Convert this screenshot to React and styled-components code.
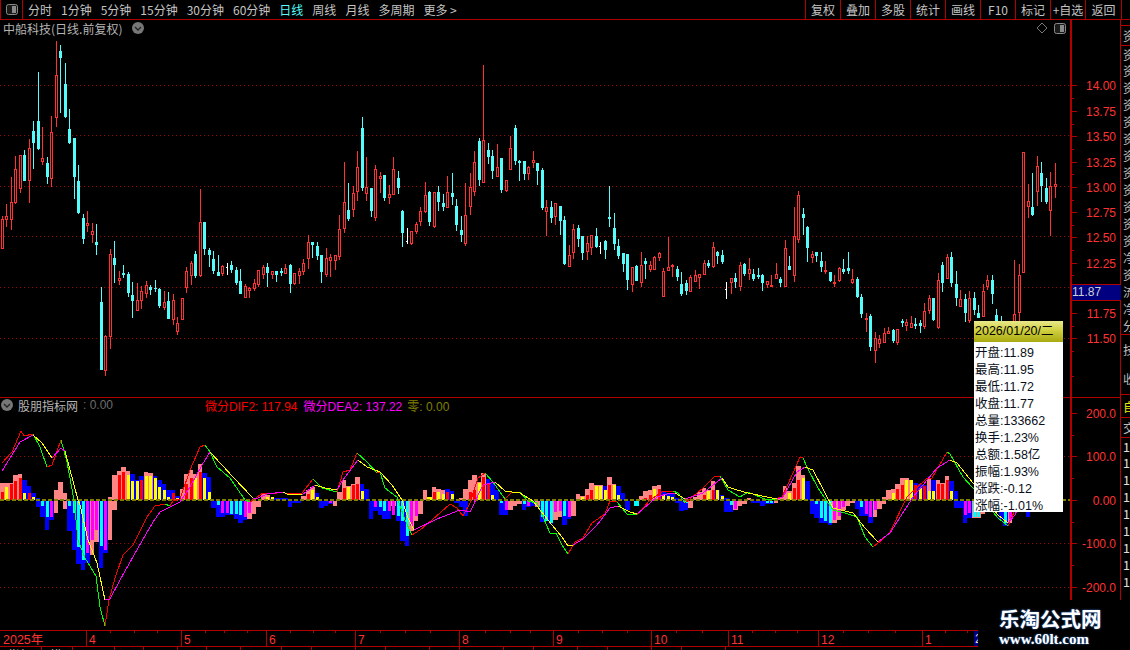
import React from 'react';
import styled, { createGlobalStyle } from 'styled-components';

const RED = '#ff3232';
const CYAN = '#54fcfc';
const LINE = '#b00000';
const DOT = '#a00000';
const UI_FONT = '"Liberation Sans", "Noto Sans CJK SC", sans-serif';

// kind, high, body top, body bottom, low (page pixels), one row per day
const CANDLES = [
  ['r',216,219,249,249],['r',204,216,220,227],['r',177,202,220,230],['r',156,169,203,204],['r',155,155,189,193],
  ['c',150,155,181,181],['r',139,148,181,203],['c',121,131,143,169],['c',72,121,149,150],['r',127,158,162,165],
  ['c',157,163,177,184],['r',116,132,179,187],['r',41,75,118,127],['c',45,51,58,113],['c',63,84,117,118],
  ['c',109,129,143,144],['c',138,138,177,199],['c',165,181,213,214],['c',214,218,239,244],['r',211,223,226,232],
  ['r',223,231,235,243],['c',224,242,245,255],['c',287,302,370,370],['r',335,336,371,376],['r',249,254,337,349],
  ['c',241,258,265,283],['r',271,278,281,285],['c',265,273,275,278],['c',272,274,293,297],['c',282,295,301,318],
  ['r',283,300,311,311],['r',286,291,301,309],['r',281,285,294,298],['c',285,287,290,295],['c',280,288,289,292],
  ['c',288,289,306,308],['r',291,302,308,310],['c',292,301,319,319],['r',294,300,320,325],['r',317,323,332,335],
  ['r',298,298,320,320],['r',267,271,288,293],['r',261,263,276,285],['c',251,254,276,278],['r',189,222,276,277],
  ['c',222,222,249,255],['c',248,250,255,267],['c',251,259,271,274],['c',255,272,276,276],['r',265,266,274,276],
  ['w',263,267,267,275],['c',261,265,270,273],['c',267,270,283,285],['c',269,281,294,294],['r',284,286,298,298],
  ['r',287,288,291,298],['r',279,283,289,291],['r',270,270,285,287],['r',265,267,275,279],['c',263,267,273,287],
  ['r',271,271,275,279],['c',271,271,275,282],['c',268,271,273,276],['r',264,268,274,274],['c',264,265,284,293],
  ['r',273,273,284,285],['r',268,271,276,284],
  ['r',259,263,272,275],['r',235,242,259,269],['c',242,242,245,258],['c',242,246,256,260],['c',255,255,272,283],
  ['r',248,258,275,277],['r',254,257,261,277],['r',255,255,261,270],['r',215,229,257,260],['r',162,202,229,233],
  ['c',183,210,219,221],['r',186,193,210,217],['r',151,167,192,201],['c',117,128,188,191],['r',157,187,194,201],
  ['c',188,188,211,217],['r',165,169,218,221],['r',172,176,179,193],['c',175,175,198,201],['r',185,194,198,204],
  ['r',157,169,195,195],['c',171,178,188,194],['c',210,211,233,247],['w',228,241,241,244],['r',231,231,244,245],
  ['r',222,224,232,234],['r',207,211,222,226],['r',182,195,212,213],['c',191,192,222,226],['r',192,192,227,228],
  ['c',186,192,202,211],['c',194,203,207,211],['r',176,192,208,208],['c',173,193,197,205],['c',199,206,225,231],
  ['c',216,230,235,242],['r',183,215,244,246],['r',173,187,207,215],['r',151,162,192,196],['c',138,141,180,186],
  ['r',65,140,183,183],['c',143,150,157,164],['c',150,156,171,179],['r',144,167,177,177],['c',158,158,190,193],
  ['r',180,180,191,192],['r',136,148,170,170],['c',125,128,161,165],['c',160,161,163,181],['c',161,161,174,180],
  ['r',166,167,174,180],['r',151,160,163,168],['c',163,163,171,185],['c',168,170,208,210],['r',200,207,212,236],
  ['c',201,207,218,223],['r',203,203,217,225],['c',206,206,221,235],['c',216,220,264,265],['r',245,255,267,267],
  ['r',224,229,253,259],['c',225,228,239,247],['c',236,236,253,260],['r',236,243,252,260],['r',235,235,248,255],
  ['c',228,236,247,248],['w',242,246,246,254],['c',240,241,250,259],['c',186,217,219,227],['c',213,228,244,250],
  ['c',239,246,256,259],['c',253,253,264,272],['c',254,254,280,290],['r',267,267,285,292],['c',265,266,281,281],
  ['r',252,265,283,287],['c',258,261,264,279],['r',261,265,270,272],
  ['r',256,257,270,270],['r',252,253,258,261],['r',268,271,297,297],['r',237,267,271,271],['r',264,265,266,277],
  ['c',266,269,277,281],['c',272,284,294,296],['c',280,283,291,295],['r',275,277,292,292],['r',270,275,282,282],
  ['r',274,274,278,289],['r',260,263,275,275],['c',260,263,266,268],['r',242,247,267,268],['c',251,252,256,264],
  ['c',250,255,262,264],['w',282,289,289,299],['r',278,278,283,294],['c',273,278,282,288],['r',262,265,287,291],
  ['c',263,264,274,276],['r',258,269,274,280],['c',269,274,279,281],['c',268,275,277,279],['c',274,275,283,291],
  ['r',281,281,285,288],['r',275,285,287,287],['r',263,274,279,279],['c',277,279,283,287],['r',240,248,287,287],
  ['c',256,266,270,270],['r',207,236,276,282],['r',191,195,240,243],['c',208,214,218,235],['c',226,227,248,262],
  ['r',251,254,258,263],['c',252,252,256,262],['c',252,261,267,272],['r',261,270,272,274],['c',272,272,281,282],
  ['r',275,282,284,287],['r',267,268,281,282],['c',259,269,272,274],['c',252,268,271,274],['r',269,279,283,284],
  ['c',277,279,297,298],['c',294,297,314,318],['r',313,318,320,332],['c',314,316,347,351],['r',332,338,351,363],
  ['r',335,339,344,348],['r',328,333,343,343],['r',327,331,334,334],['c',329,330,341,343],['r',329,329,343,345],
  ['c',319,321,323,327],['r',319,322,326,331],['r',316,323,328,328],['c',318,324,326,329],['c',320,323,326,333],
  ['r',303,311,327,329],['r',295,298,311,314],['c',298,298,320,321],['r',273,280,328,329],['c',262,265,283,292],
  ['r',254,257,279,279],['c',252,257,283,287],['c',271,284,298,306],['r',290,299,307,307],['c',294,299,313,322],
  ['r',291,298,321,323],['c',292,298,310,315],['c',305,313,318,318],['r',284,291,317,317],['r',275,280,287,290],
  ['c',275,280,294,304],['c',309,315,330,335],['c',316,325,335,340],['c',330,335,342,348],['c',332,336,344,350],
  ['r',260,314,330,335],['r',264,275,313,321],['r',152,152,273,273],['r',184,201,207,218],['c',173,207,215,216],
  ['r',156,166,192,206],['c',162,173,186,202],['c',178,188,202,204],['r',172,186,211,236],['r',163,184,187,198],
];

// day, back colour, back height, front colour, front height; below the zero line is negative
const BARS = [
  [0,'s',17,'r',8],[1,'s',17,'y',13],[2,'s',17,'r',16],[3,'s',25,'r',19],[4,'s',26,'r',22],[5,'b',20,'y',7],[6,'b',14,'r',7],[7,'b',7,'y',3],[8,'b',2],
  [8,'b',-6],[9,'b',-16,'c',-5],[10,'b',-29,'c',-16],[11,'b',-19,'m',-16],[12,'s',-12],[12,'s',10],[13,'s',18],[14,'s',7],[14,'s',-8],
  [15,'b',-30,'c',-5],[16,'b',-49,'c',-12],[17,'b',-63,'c',-46],[18,'b',-69,'c',-59],[19,'b',-62,'m',-52],[20,'s',-54,'m',-39],[21,'s',-41,'m',-29],
  [22,'b',-67,'c',-45],[23,'b',-52,'m',-49],[24,'s',-39],[24,'s',3],[25,'s',-9],[25,'s',25],
  [26,'s',29,'r',25],[27,'s',33,'r',28],[28,'s',29,'y',25],[29,'b',26,'y',19],[30,'b',20,'y',19],[31,'b',24,'r',20],[32,'s',28,'y',24],[33,'s',27,'y',24],
  [34,'b',24,'y',22],[35,'b',20,'y',13],[36,'b',16,'y',10],[37,'b',10,'y',3],[38,'b',10,'r',7],[39,'b',4,'y',2],[40,'s',11],[41,'s',26,'r',16],[42,'s',30,'r',22],
  [43,'s',26,'y',22],[44,'s',36,'r',28],[45,'b',27,'y',22],[46,'b',23,'y',8],
  [47,'b',-7],[48,'b',-16,'c',-4],[49,'b',-16,'m',-12],[50,'b',-14,'m',-12],[51,'b',-14,'c',-13],[52,'b',-18,'c',-13],[53,'b',-22,'c',-14],[54,'b',-19,'m',-16],
  [55,'s',-18,'m',-12],[56,'s',-13],[57,'s',-6],[58,'s',7],[59,'s',5,'y',3],[60,'b',2,'y',3],[61,'b',2],[62,'b',2],[63,'b',2],[64,'b',-6],[65,'b',-2],[66,'b',-2],
  [67,'s',4],[68,'s',10,'r',6],[69,'s',13,'y',10],[70,'b',7,'y',3],[71,'b',-7],[72,'b',-5],[73,'b',-3,'m',-2],[74,'s',-5],
  [75,'s',8],[76,'s',20,'r',12],[77,'s',14,'y',13],[78,'s',16,'r',15],[79,'s',23,'r',16],[80,'b',16,'y',9],[81,'b',11],
  [82,'b',-18],[83,'b',-10,'m',-6],[84,'b',-14,'c',-6],[85,'b',-18,'c',-10],[86,'b',-18,'m',-10],[87,'s',-5,'m',-14],[88,'b',-20,'c',-15],[89,'b',-40,'c',-20],[90,'b',-45,'c',-35],
  [91,'s',-30,'m',-25],[92,'s',-20,'m',-15],[93,'s',-13],[94,'s',10],[95,'y',3],[96,'s',13,'r',8],[97,'s',11,'y',8],[98,'s',10,'y',6],[99,'b',11,'r',8],[100,'b',9,'y',6],
  [101,'b',-2],[102,'b',-6],[102,'s',2],[103,'s',11],[103,'b',-15],
  [104,'s',20,'r',8],[105,'s',25,'r',10],[106,'s',18,'y',17],[107,'s',27,'r',23],[108,'b',21,'r',17],[109,'b',17,'y',5],[110,'b',10],
  [111,'b',-14,'c',-2],[112,'b',-14,'m',-9],[113,'s',-9],[114,'s',-5],[115,'s',-3],[116,'b',-9,'c',-3],[117,'b',-6,'m',-5],[118,'b',-5],[119,'s',-6],
  [120,'b',-21,'c',-16],[121,'b',-20,'c',-20],[122,'b',-23,'c',-22],[123,'s',-19,'m',-11],[124,'s',-16,'m',-10],[125,'b',-24,'c',-15],[126,'b',-18,'m',-16],[127,'s',-15],
  [128,'s',6],[129,'s',4,'y',3],[130,'s',11,'r',5],[131,'s',17,'r',10],[132,'s',15,'y',14],[133,'s',15,'y',14],[134,'b',14,'y',10],[135,'s',23,'r',15],[136,'s',16,'y',15],[137,'b',14,'y',5],[138,'b',7],
  [139,'b',-9],[141,'c',-5],[142,'s',4],[143,'s',9,'r',2],[144,'s',10,'r',5],[145,'s',14,'y',11],[146,'s',15,'r',11],[147,'b',9,'y',5],[148,'b',7,'y',4],[149,'b',7,'y',3],[150,'b',2],
  [150,'b',-2],[151,'b',-10],[152,'b',-9,'c',-2],[153,'s',-7],[154,'s',3],[155,'s',8],[156,'s',12,'r',5],[157,'s',10,'y',9],[158,'s',19,'r',10],[159,'b',10,'y',10],[160,'b',5,'y',4],[161,'b',-11],[161,'b',2],
  [162,'b',-11,'c',-4],[163,'s',-9,'m',-8],[164,'s',-5],[165,'s',-3],[166,'s',2],
  [167,'b',-2],[168,'b',-2],[169,'b',-5],[170,'b',-3,'c',-2],[171,'b',-3,'c',-2],[172,'s',-2],[173,'s',2],[174,'s',14],[175,'s',9,'y',7],[176,'s',17,'r',12],[177,'s',34,'r',20],[178,'s',25,'y',22],[179,'b',19],
  [180,'b',-13],[181,'b',-17,'c',-3],[182,'b',-22,'c',-17],[183,'b',-22,'c',-20],[184,'b',-24,'c',-22],[185,'s',-22,'m',-19],[186,'s',-19,'m',-15],[187,'s',-9,'m',-6],[188,'s',-5],[189,'s',-2],
  [190,'b',-8],[191,'b',-15,'c',-6],[192,'b',-15,'m',-13],[193,'b',-22,'m',-16],[194,'s',-16,'m',-9],[195,'s',-8],[196,'s',-3],[196,'s',3],
  [197,'s',10],[198,'s',11,'y',7],[199,'s',16,'r',11],[200,'s',22,'r',15],[201,'s',22,'y',20],[202,'s',20,'y',20],[203,'b',17,'r',15],[204,'b',16,'y',12],[205,'b',15,'r',14],[206,'s',21,'y',9],[207,'b',20,'y',9],
  [208,'s',20,'r',16],[209,'s',17,'r',16],[210,'s',24,'r',20],[211,'b',19,'y',9],[212,'b',9],
  [212,'b',-7],[213,'b',-7],[214,'b',-22,'m',-14],[215,'b',-17,'m',-12],[216,'s',-17,'c',-16],[217,'s',-17,'c',-16],[218,'s',-13],[222,'b',-18],[223,'b',-25,'c',-22],[224,'s',-22,'m',-18],[228,'b',-16],
];

const BAR_COLORS = { s: '#ff8585', b: '#0000ff', r: '#ff0000', y: '#ffff00', c: '#00ffff', m: '#ff00ff' };

// runs of [x, y]; each run carries on from where the last one ended
const FAST_LINE = [
  ['#ff0000',[2,463],[12,452],[21,431],[24,436],[33,434]],
  ['#00ff00',[40,447],[47,467]],
  ['#ff0000',[52,465],[61,440]],
  ['#00ff00',[67,462],[74,500],[78,540],[85,558],[96,576],[100,607],[105,626]],
  ['#ff0000',[109,600],[115,578],[123,555],[133,545],[147,517],[155,506],[165,504]],
  ['#00ff00',[170,506]],
  ['#ff0000',[173,501],[180,499],[190,470],[200,447],[205,445]],
  ['#00ff00',[210,452],[217,467],[230,478],[245,500],[250,502]],
  ['#ff0000',[263,493],[277,493]],
  ['#00ff00',[283,492],[287,494]],
  ['#ff0000',[302,493],[313,479]],
  ['#00ff00',[322,488],[337,492]],
  ['#ff0000',[343,472],[350,470],[357,453]],
  ['#00ff00',[367,462],[377,473]],
  ['#ff0000',[380,472]],
  ['#00ff00',[385,488],[397,497],[405,520],[412,535]],
  ['#ff0000',[420,530],[432,520],[450,504],[457,508],[463,516],[470,503],[478,478],[485,473]],
  ['#00ff00',[493,482],[505,499]],
  ['#ff0000',[512,492],[520,492]],
  ['#00ff00',[528,501],[537,503],[550,533],[556,533],[562,545],[568,554]],
  ['#ff0000',[575,542],[583,538],[592,523],[605,514],[610,501],[617,502]],
  ['#00ff00',[627,514],[637,515]],
  ['#ff0000',[650,500],[662,492],[673,491]],
  ['#00ff00',[678,493],[685,503]],
  ['#ff0000',[703,488],[715,476],[720,476]],
  ['#00ff00',[728,490],[740,497],[748,492],[767,500],[775,499]],
  ['#ff0000',[782,497],[793,473],[800,457],[803,458]],
  ['#00ff00',[807,467],[818,488],[833,510],[845,513],[857,517],[865,537],[873,547]],
  ['#ff0000',[882,540],[890,532],[907,497],[927,478],[932,478],[947,452]],
  ['#00ff00',[950,454],[963,477],[973,488],[998,518],[1008,526]],
  ['#ff0000',[1015,510],[1025,480]],
];

const SLOW_LINE = [
  ['#ff00ff',[2,471],[20,442],[33,435]],
  ['#ffff00',[42,443],[52,458]],
  ['#ff00ff',[61,448],[65,451]],
  ['#ffff00',[78,500],[80,505],[88,540],[97,563],[105,600]],
  ['#ff00ff',[110,599],[120,580],[138,548],[153,522],[160,512],[170,507],[180,502],[190,487],[202,465],[210,452]],
  ['#ffff00',[233,477],[253,498]],
  ['#ff00ff',[258,498],[267,494],[283,492]],
  ['#ffff00',[287,494],[302,495]],
  ['#ff00ff',[315,485]],
  ['#ffff00',[325,488],[337,490]],
  ['#ff00ff',[343,480],[358,460]],
  ['#ffff00',[367,467],[380,472],[392,485],[402,500],[408,518],[414,530]],
  ['#ff00ff',[437,519],[460,510],[470,512],[483,485],[495,482]],
  ['#ffff00',[505,491],[512,492],[520,493],[533,501],[552,525],[562,537],[568,546],[573,545]],
  ['#ff00ff',[583,539],[597,525],[610,508],[618,506]],
  ['#ffff00',[630,512],[637,514]],
  ['#ff00ff',[657,497],[670,493],[675,493]],
  ['#ffff00',[685,499]],
  ['#ff00ff',[703,493],[722,478]],
  ['#ffff00',[728,487],[737,490],[748,493],[767,497],[777,499]],
  ['#ff00ff',[783,497],[797,472],[805,467]],
  ['#ffff00',[813,470],[825,493],[833,508],[853,513],[865,528],[878,542]],
  ['#ff00ff',[890,533],[913,497],[937,468],[950,460]],
  ['#ffff00',[957,463],[973,483],[998,515],[1008,523]],
  ['#ff00ff',[1015,515],[1025,490]],
];

const PERIODS = ['分时', '1分钟', '5分钟', '15分钟', '30分钟', '60分钟', '日线', '周线', '月线', '多周期', '更多 >'];
const ACTIONS = ['复权', '叠加', '多股', '统计', '画线', 'F10', '标记', '+自选', '返回'];
const PRICE_TICKS = [[85,'14.00'],[111,'13.75'],[136,'13.50'],[162,'13.25'],[187,'13.00'],[212,'12.75'],[237,'12.50'],[263,'12.25'],[313,'11.75'],[338,'11.50']];
const PRICE_GRID = [85, 135, 186, 236, 287, 338];
const MACD_TICKS = [[413,'200.0'],[456,'100.0'],[500,'0.00'],[543,'-100.0'],[587,'-200.0']];
const MONTHS = [[86,'4'],[181,'5'],[266,'6'],[355,'7'],[459,'8'],[553,'9'],[651,'10'],[728,'11'],[818,'12'],[922,'1']];
const MONTH_TICKS = [110,134,157,205,224,247,290,313,335,380,405,430,485,510,530,578,602,627,676,702,752,775,797,843,868,895,945,967];
const QUOTE = [['开盘','11.89'],['最高','11.95'],['最低','11.72'],['收盘','11.77'],['总量','133662'],['换手','1.23%'],['总额','1.58亿'],['振幅','1.93%'],['涨跌','-0.12'],['涨幅','-1.01%']];
const SIDE_ROWS = ['资','资','资','资','资','资','资','资','资','资','资','资','净','资','流','净','分'];
const BOTTOM_TABS = [[42,'指标'],[31,'模板'],[42,''],[29,''],[34,''],[29,''],[34,''],[41,''],[30,''],[44,''],[30,''],[44,''],[30,''],[44,''],[30,''],[44,''],[30,''],[44,''],[30,''],[44,'']];

const GlobalStyle = createGlobalStyle`
  html, body { margin: 0; padding: 0; background: #000; }
  body { font-family: ${UI_FONT}; }
`;

const Page = styled.div`
  position: relative;
  width: 1130px;
  height: 650px;
  background: #000;
  overflow: hidden;
  display: flex;
  flex-direction: column;
`;

const Toolbar = styled.div`
  height: 19px;
  flex: none;
  display: flex;
  align-items: stretch;
  border-bottom: 1px solid ${LINE};
`;

const ToggleCell = styled.div`
  width: 23px;
  flex: none;
  box-sizing: border-box;
  border-left: 1px solid ${LINE};
  border-right: 1px solid ${LINE};
  display: flex;
  align-items: center;
  justify-content: center;
`;

const Periods = styled.div`
  display: flex;
  align-items: center;
  gap: 9px;
  padding-left: 5px;
  flex: 1;
`;

const Period = styled.span`
  font: 12px "Noto Sans CJK SC", sans-serif;
  white-space: nowrap;
  color: ${(p) => (p.$active ? CYAN : '#c4c4c4')};
`;

const Actions = styled.div`
  display: flex;
  margin-right: 8px;
`;

const Action = styled.div`
  width: ${(p) => (p.$wide ? 37 : 35)}px;
  box-sizing: border-box;
  border-left: 1px solid ${LINE};
  border-right: ${(p) => (p.$wide ? `1px solid ${LINE}` : 'none')};
  display: flex;
  align-items: center;
  justify-content: center;
  font: 12px "Noto Sans CJK SC", sans-serif;
  white-space: nowrap;
  color: #c4c4c4;
`;

const Body = styled.div`
  flex: 1;
  display: flex;
  min-height: 0;
`;

const Charts = styled.div`
  width: 1070px;
  flex: none;
  display: flex;
  flex-direction: column;
`;

const Pane = styled.div`
  position: relative;
  flex: none;
  height: ${(p) => p.$height}px;
  border-bottom: ${(p) => (p.$divided ? `1px solid ${LINE}` : 'none')};
`;

const Drawing = styled.svg`
  display: block;
  shape-rendering: crispEdges;
`;

const PaneHead = styled.div`
  position: absolute;
  left: 0;
  right: 0;
  top: ${(p) => p.$top}px;
  height: 16px;
  display: flex;
  align-items: center;
  gap: 4px;
  padding-left: ${(p) => p.$inset}px;
  font: 12px "Noto Sans CJK SC", sans-serif;
  white-space: nowrap;
  color: #b4b4b4;
`;

const HeadIcons = styled.div`
  margin-left: auto;
  display: flex;
  align-items: center;
  gap: 6px;
  padding-right: 4px;
`;

const Reading = styled.span`
  color: ${(p) => p.$color};
  margin-left: ${(p) => p.$gap || 0}px;
  font: 12px ${UI_FONT};
`;

const TimeAxis = styled.div`
  width: 978px;
  height: 15px;
  flex: none;
  border-top: 1px solid ${LINE};
  border-bottom: 1px solid ${LINE};
`;

const BottomTabs = styled.div`
  height: 3px;
  flex: none;
  display: flex;
  overflow: hidden;
`;

const BottomTab = styled.div`
  flex: none;
  box-sizing: border-box;
  width: ${(p) => p.$width}px;
  padding-left: 8px;
  border-right: 1px solid ${LINE};
  font: 12px/16px "Noto Sans CJK SC", sans-serif;
  color: #c4c4c4;
`;

const Axis = styled.div`
  width: 51px;
  flex: none;
  border-left: 2px solid ${LINE};
  border-right: 1px solid ${LINE};
  box-sizing: border-box;
  height: 581px;
`;

const SideStrip = styled.div`
  flex: 1;
  min-width: 0;
  overflow: hidden;
  padding-top: 5px;
  height: 576px;
`;

const SideCell = styled.div`
  height: ${(p) => p.$height || 17}px;
  border-top: ${(p) => (p.$ruled ? `1px solid ${LINE}` : 'none')};
  padding-left: 2px;
  box-sizing: border-box;
  font: 12.5px "Noto Sans CJK SC", sans-serif;
  line-height: ${(p) => p.$height || 17}px;
  white-space: nowrap;
  color: ${(p) => p.$color || '#bcbcbc'};
`;

const PriceTag = styled.div`
  position: absolute;
  left: 1072px;
  top: 284px;
  width: 49px;
  height: 17px;
  box-sizing: border-box;
  border-top: 1px solid ${LINE};
  border-bottom: 1px solid ${LINE};
  background: #000080;
  color: #d0d0d0;
  font: 12px/15px ${UI_FONT};
`;

const QuoteCard = styled.div`
  position: absolute;
  left: 974px;
  top: 321px;
  width: 89px;
  height: 191px;
  background: #fff;
  display: flex;
  flex-direction: column;
`;

const QuoteDate = styled.div`
  height: 21px;
  flex: none;
  margin-bottom: 3px;
  padding-left: 1px;
  background: linear-gradient(#e8e88c, #d0d040 45%, #a8a810);
  color: #000;
  font: 12.5px/21px ${UI_FONT};
  white-space: nowrap;
`;

const QuoteRow = styled.div`
  height: 17px;
  flex: none;
  padding-left: 1px;
  color: #0a1020;
  font: 12.5px/17px ${UI_FONT};
  white-space: nowrap;
`;

const Watermark = styled.div`
  position: absolute;
  left: 978px;
  top: 600px;
  right: 0;
  bottom: 0;
  background: #000;
  display: flex;
  flex-direction: column;
  align-items: flex-start;
  padding-left: 21px;
  box-sizing: border-box;
`;

const MarkName = styled.div`
  margin-top: 6px;
  font: bold 20.5px/24px "Noto Sans CJK SC", sans-serif;
  color: #fff;
  text-shadow: 0 0 2px #3a80e0;
`;

const MarkSite = styled.div`
  margin-top: 1px;
  font: bold 15px/16px "Liberation Serif", serif;
  color: #fff;
  text-shadow: 0 0 2px #3a80e0;
`;

function DotPattern() {
  return (
    <defs>
      <pattern id="dots" x="0" y="0" width="4" height="1" patternUnits="userSpaceOnUse">
        <rect width="1" height="1" fill={DOT} />
      </pattern>
    </defs>
  );
}

function Dotted({ y, width }) {
  return <rect x="0" y={y} width={width} height="1" fill="url(#dots)" />;
}

function Candle({ row, index }) {
  const [kind, high, top, bottom, low] = row;
  const x = Math.floor(2 + 4.5 * index);
  if (kind === 'w') {
    return (
      <g fill="#fff">
        <rect x={x} y={high} width="1" height={low - high} />
        <rect x={x - 1} y={top} width="1" height="1" />
      </g>
    );
  }
  if (kind === 'c') {
    return (
      <g fill={CYAN}>
        <rect x={x} y={high} width="1" height={low - high} />
        <rect x={x - 1} y={top} width="3" height={Math.max(bottom - top, 1)} />
      </g>
    );
  }
  return (
    <g fill={RED}>
      <rect x={x} y={high} width="1" height={Math.max(top - high, 0)} />
      <rect x={x} y={bottom} width="1" height={Math.max(low - bottom, 0)} />
      <rect x={x - 0.5} y={top + 0.5} width="2" height={Math.max(bottom - top - 1, 1)} fill="#000" stroke={RED} />
    </g>
  );
}

function Bar({ bar }) {
  const [index, back, backHeight, front, frontHeight] = bar;
  const left = Math.floor(4.5 * index);
  const right = Math.floor(4.5 * (index + 1));
  const center = Math.floor(2 + 4.5 * index);
  const place = (h) => (h > 0 ? 500 - h : 501);
  return (
    <g>
      <rect x={left} y={place(backHeight)} width={right - left} height={Math.abs(backHeight)} fill={BAR_COLORS[back]} />
      {front && <rect x={center - 1} y={place(frontHeight)} width="3" height={Math.abs(frontHeight)} fill={BAR_COLORS[front]} />}
    </g>
  );
}

// each coloured run starts at the last point of the run before it
function TrendLine({ runs }) {
  let last = null;
  return runs.map(([color, ...points], i) => {
    const all = last ? [last, ...points] : points;
    last = points[points.length - 1];
    return <polyline key={i} points={all.map((p) => p.join(',')).join(' ')} fill="none" stroke={color} strokeWidth="1" />;
  });
}

function PaneToggle() {
  return (
    <svg width="12" height="11" viewBox="0 0 12 11" style={{ display: 'block' }}>
      <rect x="0.5" y="0.5" width="11" height="10" rx="2" fill="#1a1a1a" stroke="#8a8a8a" />
      <rect x="6" y="2" width="4" height="7" fill="#8a8a8a" />
    </svg>
  );
}

function Chevron() {
  return (
    <svg width="12" height="12" viewBox="0 0 12 12" style={{ display: 'block', flex: 'none' }}>
      <circle cx="6" cy="6" r="6" fill="#777" />
      <path d="M3 5 L6 8 L9 5" fill="none" stroke="#222" strokeWidth="1.3" />
    </svg>
  );
}

function TickColumn({ ticks, grid, from, height }) {
  return (
    <Drawing width="48" height={height} viewBox={`0 ${from} 48 ${height}`}>
      {grid.map((y) => (
        <rect key={y} x="0" y={y} width="2" height="1" fill={LINE} />
      ))}
      {ticks.map(([y, label]) => (
        <g key={label}>
          <rect x="0" y={y} width="5" height="1" fill={LINE} />
          <text x="44" y={y + 5} textAnchor="end" fill={RED} fontSize="12" fontFamily={UI_FONT} style={{ shapeRendering: 'auto' }}>{label}</text>
        </g>
      ))}
    </Drawing>
  );
}

export default function App() {
  return (
    <Page>
      <GlobalStyle />
      <Toolbar>
        <ToggleCell><PaneToggle /></ToggleCell>
        <Periods>
          {PERIODS.map((name) => (
            <Period key={name} $active={name === '日线'}>{name}</Period>
          ))}
        </Periods>
        <Actions>
          {ACTIONS.map((name) => (
            <Action key={name} $wide={name === '返回'}>{name}</Action>
          ))}
        </Actions>
      </Toolbar>

      <Body>
        <Charts>
          <Pane $height={377} $divided>
            <Drawing width="1070" height="377" viewBox="0 20 1070 377">
              <DotPattern />
              {PRICE_GRID.map((y) => <Dotted key={y} y={y} width={1070} />)}
              {CANDLES.map((row, i) => <Candle key={i} row={row} index={i} />)}
            </Drawing>
            <PaneHead $top={0} $inset={3}>
              中船科技(日线.前复权)
              <span style={{ width: 2 }} />
              <Chevron />
              <HeadIcons>
                <svg width="12" height="12" viewBox="0 0 12 12" style={{ display: 'block' }}>
                  <path d="M6 1 L11 6 L6 11 L1 6 Z" fill="none" stroke="#777" />
                </svg>
                <PaneToggle />
              </HeadIcons>
            </PaneHead>
          </Pane>

          <Pane $height={232}>
            <Drawing width="1070" height="232" viewBox="0 398 1070 232">
              {[456, 543, 587].map((y) => <Dotted key={y} y={y} width={1070} />)}
              {BARS.map((bar, i) => <Bar key={i} bar={bar} />)}
              <line x1="0" x2="1070" y1="500" y2="500" stroke="#808000" strokeWidth="2" strokeDasharray="4 2" />
              <TrendLine runs={FAST_LINE} />
              <TrendLine runs={SLOW_LINE} />
            </Drawing>
            <PaneHead $top={-1} $inset={1}>
              <Chevron />
              <span style={{ marginLeft: 1 }}>股朋指标网</span>
              <Reading $color="#6c6c6c" $gap={1}>: 0.00</Reading>
              <Reading $color="#ff0000" $gap={88}>微分DIF2: 117.94</Reading>
              <Reading $color="#ff00ff" $gap={2}>微分DEA2: 137.22</Reading>
              <Reading $color="#808000" $gap={1}>零: 0.00</Reading>
            </PaneHead>
          </Pane>

          <TimeAxis>
            <Drawing width="978" height="15" viewBox="0 631 978 15">
              <text x="3" y="644" fill={RED} fontSize="12.5" fontFamily={UI_FONT} style={{ shapeRendering: 'auto' }}>2025年</text>
              {MONTH_TICKS.map((x) => <rect key={x} x={x} y="631" width="1" height="2" fill={LINE} />)}
              {MONTHS.map(([x, label]) => (
                <g key={x}>
                  <rect x={x} y="631" width="1" height="15" fill={LINE} />
                  <text x={x + 3} y="644" fill={RED} fontSize="12" fontFamily={UI_FONT}>{label}</text>
                </g>
              ))}
              <rect x="974" y="631" width="4" height="15" fill="#000080" />
              <text x="975" y="643" fill="#ddd" fontSize="12" fontFamily={UI_FONT}>2</text>
            </Drawing>
          </TimeAxis>

          <BottomTabs>
            {BOTTOM_TABS.map(([w, label], i) => <BottomTab key={i} $width={w}>{label}</BottomTab>)}
          </BottomTabs>
        </Charts>

        <Axis>
          <TickColumn ticks={PRICE_TICKS} grid={[98, 124, 149, 174, 200, 225, 250, 275, 300, 326, 351, 376]} from={20} height={377} />
          <Drawing width="48" height="1" viewBox="0 0 48 1"><rect width="48" height="1" fill={LINE} /></Drawing>
          <TickColumn ticks={MACD_TICKS} grid={[435, 478, 522, 565]} from={398} height={203} />
        </Axis>

        <SideStrip>
          <SideCell $ruled $height={20}>资</SideCell>
          {SIDE_ROWS.map((t, i) => <SideCell key={i} $ruled={i === 0}>{t}</SideCell>)}
          <SideCell $ruled $height={30}>技</SideCell>
          <SideCell $height={30}>收</SideCell>
          <SideCell $ruled $height={23} $color="#e8e800">自</SideCell>
          <SideCell $ruled $height={20}>交</SideCell>
          {[0, 1, 2, 3, 4, 5, 6, 7, 8].map((n) => <SideCell key={n} $ruled={n === 0} $color="#e0e0e0">1</SideCell>)}
        </SideStrip>
      </Body>

      <PriceTag>11.87</PriceTag>

      <QuoteCard>
        <QuoteDate>2026/01/20/二</QuoteDate>
        {QUOTE.map(([label, value]) => (
          <QuoteRow key={label}>{label}:{value}</QuoteRow>
        ))}
      </QuoteCard>

      <Watermark>
        <MarkName>乐淘公式网</MarkName>
        <MarkSite>www.60lt.com</MarkSite>
      </Watermark>
    </Page>
  );
}
